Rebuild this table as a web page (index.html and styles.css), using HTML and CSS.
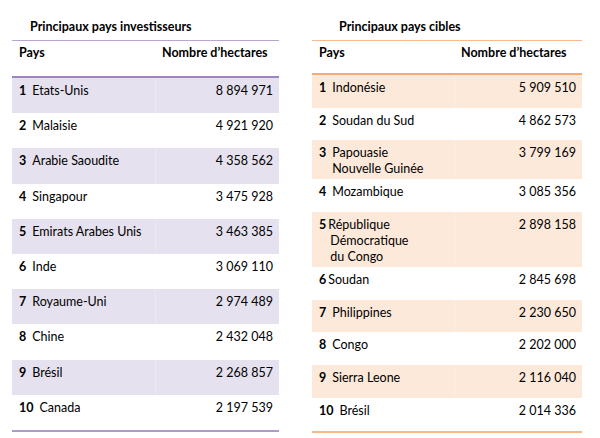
FILE: index.html
```html
<!DOCTYPE html>
<html lang="fr">
<head>
<meta charset="utf-8">
<link rel="stylesheet" href="styles.css">
</head>
<body>
<div class="page">
  <section class="block inv">
    <h2 class="title">Principaux pays investisseurs</h2>
    <table class="tbl">
      <thead>
        <tr><th>Pays</th><th>Nombre d’hectares</th></tr>
      </thead>
      <tbody>
        <tr class="sh"><td><div class="c"><b class="n">1</b><span>Etats-Unis</span></div></td><td class="v">8 894 971</td></tr>
        <tr><td><div class="c"><b class="n">2</b><span>Malaisie</span></div></td><td class="v">4 921 920</td></tr>
        <tr class="sh"><td><div class="c"><b class="n">3</b><span>Arabie Saoudite</span></div></td><td class="v">4 358 562</td></tr>
        <tr><td><div class="c"><b class="n">4</b><span>Singapour</span></div></td><td class="v">3 475 928</td></tr>
        <tr class="sh"><td><div class="c"><b class="n">5</b><span>Emirats Arabes Unis</span></div></td><td class="v">3 463 385</td></tr>
        <tr><td><div class="c"><b class="n">6</b><span>Inde</span></div></td><td class="v">3 069 110</td></tr>
        <tr class="sh"><td><div class="c"><b class="n">7</b><span>Royaume-Uni</span></div></td><td class="v">2 974 489</td></tr>
        <tr><td><div class="c"><b class="n">8</b><span>Chine</span></div></td><td class="v">2 432 048</td></tr>
        <tr class="sh"><td><div class="c"><b class="n">9</b><span>Brésil</span></div></td><td class="v">2 268 857</td></tr>
        <tr class="last"><td><div class="c"><b class="n">10</b><span>Canada</span></div></td><td class="v">2 197 539</td></tr>
      </tbody>
    </table>
  </section>
  <section class="block cib">
    <h2 class="title">Principaux pays cibles</h2>
    <table class="tbl">
      <thead>
        <tr><th>Pays</th><th>Nombre d’hectares</th></tr>
      </thead>
      <tbody>
        <tr class="sh"><td><div class="c"><b class="n">1</b><span>Indonésie</span></div></td><td class="v">5 909 510</td></tr>
        <tr><td><div class="c"><b class="n">2</b><span>Soudan du Sud</span></div></td><td class="v">4 862 573</td></tr>
        <tr class="sh"><td><div class="c"><b class="n">3</b><span>Papouasie<br>Nouvelle Guinée</span></div></td><td class="v">3 799 169</td></tr>
        <tr><td><div class="c"><b class="n">4</b><span>Mozambique</span></div></td><td class="v">3 085 356</td></tr>
        <tr class="sh"><td><div class="c tight"><b class="n">5</b><span>République<br><span class="ind">Démocratique</span><br><span class="ind">du Congo</span></span></div></td><td class="v">2 898 158</td></tr>
        <tr><td><div class="c tight"><b class="n">6</b><span>Soudan</span></div></td><td class="v">2 845 698</td></tr>
        <tr class="sh"><td><div class="c"><b class="n">7</b><span>Philippines</span></div></td><td class="v">2 230 650</td></tr>
        <tr><td><div class="c"><b class="n">8</b><span>Congo</span></div></td><td class="v">2 202 000</td></tr>
        <tr class="sh"><td><div class="c"><b class="n">9</b><span>Sierra Leone</span></div></td><td class="v">2 116 040</td></tr>
        <tr class="last"><td><div class="c"><b class="n">10</b><span>Brésil</span></div></td><td class="v">2 014 336</td></tr>
      </tbody>
    </table>
  </section>
</div>
</body>
</html>
```

FILE: styles.css
```css
html, body {
  margin: 0;
  padding: 0;
  background: #ffffff;
}

body {
  font-family: "Lato", "Liberation Sans", sans-serif;
  font-size: 12.5px;
  color: #000000;
}

.page {
  display: flex;
  gap: 33px;
  padding: 19px 0 0 12px;
}

.block {
  display: flex;
  flex-direction: column;
}

.inv { width: 267px; }
.cib { width: 270px; }

.title {
  margin: 0;
  font-size: 12.5px;
  font-weight: 700;
  line-height: 16px;
  height: 21px;
}

.inv .title { padding-left: 18px; }
.cib .title { padding-left: 27px; }

.tbl {
  width: 100%;
  border-collapse: collapse;
  table-layout: fixed;
}

.tbl th {
  text-align: left;
  font-weight: 700;
  line-height: 16px;
  vertical-align: top;
  padding: 4px 7px 0 7px;
}

.tbl th:first-child { width: 129px; }
.cib .tbl th:first-child { width: 128px; }

.inv .tbl th { height: 31px; }
.cib .tbl th { height: 28px; }

.inv .tbl thead tr { border-top: 1px solid #b7a7cf; border-bottom: 2px solid #9c86c0; }
.cib .tbl thead tr { border-top: 1px solid #f7b98e; border-bottom: 2px solid #f5ab78; }

.tbl td {
  vertical-align: top;
  line-height: 16px;
  padding: 5px 7px 2px 7px;
}

.inv .tbl td { height: 28.2px; }
.cib .tbl td { height: 25.7px; }

.tbl td.v {
  text-align: right;
  padding-right: 6px;
}

.inv .sh td { background: #e5e1ee; }
.cib .sh td { background: #fde9da; }

.inv .sh td.v { border-left: 1px solid #ebe8f2; }
.cib .sh td.v { border-left: 1px solid #fcefe4; }

.inv .last { border-bottom: 2px solid #ad9bc9; }
.cib .last { border-bottom: 2px solid #f8b98a; }

.c {
  display: flex;
  gap: 6px;
}

.c.tight { gap: 2px; }

.n { font-weight: 700; }

.ind { padding-left: 2px; }
```
